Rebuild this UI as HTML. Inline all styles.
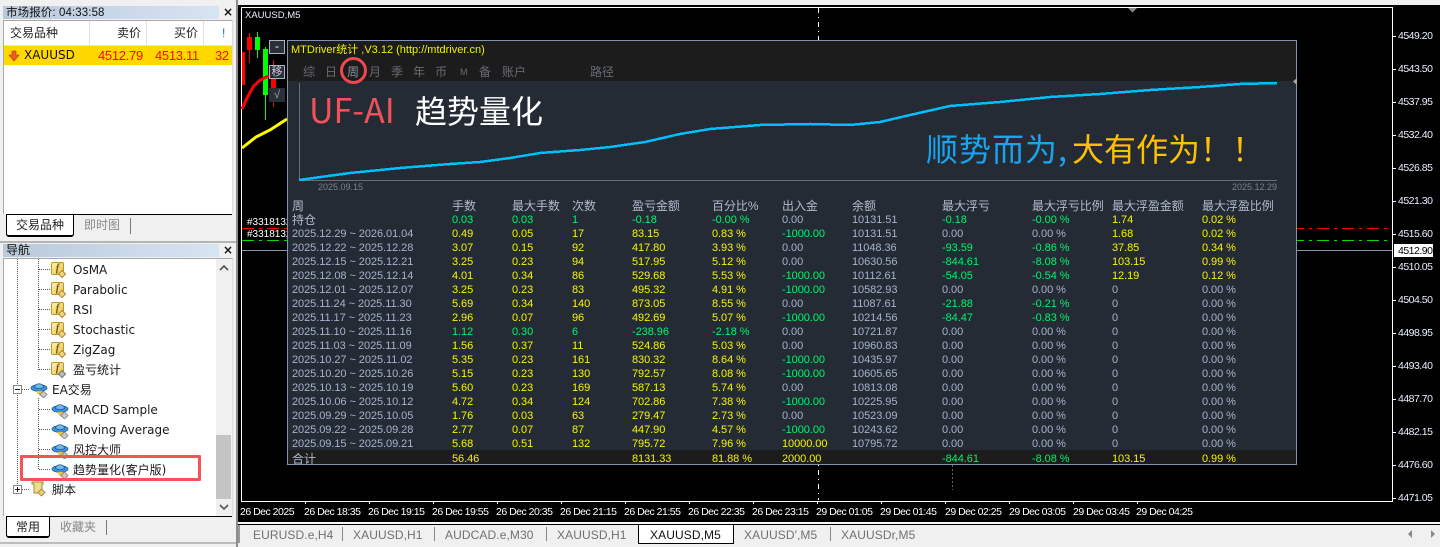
<!DOCTYPE html>
<html><head><meta charset="utf-8"><style>
html,body{margin:0;padding:0;width:1440px;height:547px;overflow:hidden;background:#f0f0f0}
body{position:relative;font-family:"Liberation Sans","Noto Sans CJK SC",sans-serif}
.a,.a *{box-sizing:border-box}
.a{position:absolute;white-space:nowrap}
.tree{font:12px/20px "DejaVu Sans","Noto Sans CJK SC",sans-serif;color:#1a1a1a;height:20px;margin-top:1px}
.ch{font-family:"Liberation Sans",sans-serif;font-size:10.500px;line-height:12px;color:#fff;letter-spacing:-.5px}
.px{left:1398px;color:#e8f0ff;margin-top:2px}
.tk{background:#fff;width:3px;height:1px;left:1393px}
.tt{top:506px}
.vt{background:#fff;width:1px;height:3px;top:501px}
.tab{top:528px;font-size:12px;line-height:15px;color:#707070;letter-spacing:.1px}
.r{position:absolute;left:0;width:1440px;height:14px;margin-top:1px;font:11px/14px "Liberation Sans","Noto Sans CJK SC",sans-serif;color:#a4b4cc;letter-spacing:-.06px}
.r span{position:absolute;white-space:nowrap}
.r span:nth-child(1){left:292px}.r span:nth-child(2){left:452px}.r span:nth-child(3){left:512px}.r span:nth-child(4){left:572px}
.r span:nth-child(5){left:632px}.r span:nth-child(6){left:712px}.r span:nth-child(7){left:782px}.r span:nth-child(8){left:852px}
.r span:nth-child(9){left:942px}.r span:nth-child(10){left:1032px}.r span:nth-child(11){left:1112px}.r span:nth-child(12){left:1202px}
.g{color:#00f56a}.y{color:#f5f500}
.h{font-size:12px;color:#b0bccd}
.m{top:64px;font-size:12px;line-height:16px;color:#666c74}
.dh{background-image:linear-gradient(90deg,#555 1px,transparent 1px);background-size:2px 1px;height:1px}
.dv{background-image:linear-gradient(#555 1px,transparent 1px);background-size:1px 2px;width:1px}
.fi{width:13px;height:13px;border:1px solid #b8962e;border-radius:2px;background:linear-gradient(135deg,#fff2a8,#e8c34a);font:italic bold 10px/11px "Liberation Serif",serif;color:#6b5210;text-align:center}
.dm{width:6px;height:6px;transform:rotate(45deg);background:#f2d67a;border:1px solid #a8883a}
</style></head><body>
<svg width="0" height="0" style="position:absolute"><defs>
<symbol id="hat" viewBox="0 0 18 18"><ellipse cx="9" cy="8" rx="8" ry="3.4" fill="#3d94d6" stroke="#1f5f96" stroke-width=".8"/><path d="M4.5 7.5C4.5 2.5 13.5 2.5 13.5 7.5C11 9 7 9 4.5 7.5Z" fill="#6fb8ea" stroke="#1f5f96" stroke-width=".8"/><path d="M7 11h5l1 3-2.500 2-3-2z" fill="#e9c23c"/><rect x="11" y="12" width="5" height="5" transform="rotate(45 13.500 14.500)" fill="#c9c9c9" stroke="#777" stroke-width=".7"/></symbol>
</defs></svg>

<!-- top strip -->
<div class="a" style="left:0;top:0;width:1440px;height:4px;background:#f0f0f0"></div>

<!-- market watch -->
<div class="a" style="left:3px;top:6px;width:216px;height:13px;background:linear-gradient(90deg,#b9c9da,#d7e4f2)"></div>
<div class="a" style="left:6px;top:6px;font-size:11.500px;line-height:15px;color:#111;letter-spacing:.1px">市场报价: 04:33:58</div>
<div class="a" style="left:223px;top:6px;font:bold 12px/13px 'DejaVu Sans',sans-serif;color:#111">×</div>
<div class="a" style="left:3px;top:20px;width:230px;height:194px;background:#fff;border-left:1px solid #a8a8a8;border-top:1px solid #a8a8a8;border-right:1px solid #ddd"></div>
<div class="a" style="left:89px;top:21px;width:1px;height:24px;background:#e0e0e0"></div>
<div class="a" style="left:146px;top:21px;width:1px;height:24px;background:#e0e0e0"></div>
<div class="a" style="left:203px;top:21px;width:1px;height:24px;background:#e0e0e0"></div>
<div class="a" style="left:4px;top:45px;width:228px;height:1px;background:#e4e4e4"></div>
<div class="a" style="left:10px;top:25px;font-size:12px;line-height:16px;color:#222">交易品种</div>
<div class="a" style="left:117px;top:25px;font-size:12px;line-height:16px;color:#222">卖价</div>
<div class="a" style="left:174px;top:25px;font-size:12px;line-height:16px;color:#222">买价</div>
<div class="a" style="left:222px;top:25px;font-size:12px;line-height:16px;color:#1c6fd0">!</div>
<div class="a" style="left:4px;top:46px;width:228px;height:19px;background:#ffd800"></div>
<svg class="a" style="left:8px;top:50px" width="12" height="12"><path d="M4 1h4v4h3L6 11 1 5h3z" fill="#f05a1e" stroke="#a83a10" stroke-width=".6"/></svg>
<div class="a" style="left:24px;top:47px;font:12px/17px 'DejaVu Sans',sans-serif;color:#111">XAUUSD</div>
<div class="a" style="left:98px;top:47px;font-size:13px;line-height:17px;color:#f01000;letter-spacing:-.3px">4512.79</div>
<div class="a" style="left:155px;top:47px;font-size:13px;line-height:17px;color:#f01000;letter-spacing:-.3px">4513.11</div>
<div class="a" style="left:215px;top:47px;font-size:13px;line-height:17px;color:#f01000;letter-spacing:-.3px">32</div>
<!-- market tabs -->
<div class="a" style="left:73px;top:214px;width:159px;height:1px;background:#000"></div>
<div class="a" style="left:6px;top:214px;width:68px;height:23px;background:#fff;border:1px solid #000;border-top:1px solid #000;border-bottom:2px solid #000;border-radius:0 0 3px 3px"></div>
<div class="a" style="left:16px;top:217px;font-size:12px;line-height:16px;color:#222">交易品种</div>
<div class="a" style="left:84px;top:217px;font-size:12px;line-height:16px;color:#888">即时图</div>
<div class="a" style="left:130px;top:218px;width:1px;height:16px;background:#777"></div>
<div class="a" style="left:0;top:241px;width:236px;height:2px;background:#b4b4b4"></div>

<!-- navigator -->
<div class="a" style="left:3px;top:244px;width:216px;height:13px;background:linear-gradient(90deg,#b9c9da,#d7e4f2)"></div>
<div class="a" style="left:6px;top:243px;font-size:12px;line-height:15px;color:#111">导航</div>
<div class="a" style="left:223px;top:244px;font:bold 12px/13px 'DejaVu Sans',sans-serif;color:#111">×</div>
<div class="a" style="left:3px;top:258px;width:230px;height:258px;background:#fff;border-left:1px solid #a8a8a8;border-top:1px solid #a8a8a8;border-right:1px solid #ddd"></div>
<div class="a" style="left:216px;top:259px;width:16px;height:257px;background:#f0f0f0"></div>
<div class="a" style="left:216px;top:435px;width:15px;height:64px;background:#c4c4c4"></div>
<svg class="a" style="left:219px;top:264px" width="10" height="8"><path d="M1 6L5 2l4 4" fill="none" stroke="#555" stroke-width="1.600"/></svg>
<svg class="a" style="left:219px;top:503px" width="10" height="8"><path d="M1 2l4 4 4-4" fill="none" stroke="#555" stroke-width="1.600"/></svg>
<!-- tree lines -->
<div class="a dv" style="left:17px;top:259px;height:230px"></div>
<div class="a dv" style="left:38px;top:259px;height:111px"></div>
<div class="a dv" style="left:38px;top:398px;height:71px"></div>
<div class="a dh" style="left:39px;top:269px;width:11px"></div>
<div class="a dh" style="left:39px;top:289px;width:11px"></div>
<div class="a dh" style="left:39px;top:309px;width:11px"></div>
<div class="a dh" style="left:39px;top:329px;width:11px"></div>
<div class="a dh" style="left:39px;top:349px;width:11px"></div>
<div class="a dh" style="left:39px;top:369px;width:11px"></div>
<div class="a dh" style="left:39px;top:409px;width:11px"></div>
<div class="a dh" style="left:39px;top:429px;width:11px"></div>
<div class="a dh" style="left:39px;top:449px;width:11px"></div>
<div class="a dh" style="left:39px;top:469px;width:11px"></div>
<div class="a dh" style="left:22px;top:389px;width:8px"></div>
<div class="a dh" style="left:22px;top:489px;width:8px"></div>
<!-- f icons -->
<div class="a fi" style="left:51px;top:262px">f</div><div class="a dm" style="left:59px;top:271px"></div>
<div class="a fi" style="left:51px;top:282px">f</div><div class="a dm" style="left:59px;top:291px"></div>
<div class="a fi" style="left:51px;top:302px">f</div><div class="a dm" style="left:59px;top:311px"></div>
<div class="a fi" style="left:51px;top:322px">f</div><div class="a dm" style="left:59px;top:331px"></div>
<div class="a fi" style="left:51px;top:342px">f</div><div class="a dm" style="left:59px;top:351px"></div>
<div class="a fi" style="left:51px;top:362px">f</div><div class="a dm" style="left:59px;top:371px;background:#bbb;border-color:#777"></div>
<!-- tree text -->
<div class="a tree" style="left:73px;top:259px">OsMA</div>
<div class="a tree" style="left:73px;top:279px">Parabolic</div>
<div class="a tree" style="left:73px;top:299px">RSI</div>
<div class="a tree" style="left:73px;top:319px">Stochastic</div>
<div class="a tree" style="left:73px;top:339px">ZigZag</div>
<div class="a tree" style="left:73px;top:359px">盈亏统计</div>
<div class="a tree" style="left:52px;top:379px">EA交易</div>
<div class="a tree" style="left:73px;top:399px">MACD Sample</div>
<div class="a tree" style="left:73px;top:419px">Moving Average</div>
<div class="a tree" style="left:73px;top:439px">风控大师</div>
<div class="a tree" style="left:73px;top:459px">趋势量化(客户版)</div>
<div class="a tree" style="left:52px;top:479px">脚本</div>
<!-- expanders -->
<div class="a" style="left:13px;top:385px;width:9px;height:9px;border:1px solid #888;background:#fff"></div><div class="a" style="left:15px;top:389px;width:5px;height:1px;background:#222"></div>
<div class="a" style="left:13px;top:485px;width:9px;height:9px;border:1px solid #888;background:#fff"></div><div class="a" style="left:15px;top:489px;width:5px;height:1px;background:#222"></div><div class="a" style="left:17px;top:487px;width:1px;height:5px;background:#222"></div>
<!-- hats -->
<svg class="a" style="left:30px;top:380px" width="18" height="18"><use href="#hat"/></svg>
<svg class="a" style="left:51px;top:401px" width="18" height="18"><use href="#hat"/></svg>
<svg class="a" style="left:51px;top:421px" width="18" height="18"><use href="#hat"/></svg>
<svg class="a" style="left:51px;top:441px" width="18" height="18"><use href="#hat"/></svg>
<svg class="a" style="left:51px;top:461px" width="18" height="18"><use href="#hat"/></svg>
<svg class="a" style="left:30px;top:481px" width="16" height="16"><path d="M2 1h11v2h-1v9H4V3H2z" fill="#f2dc8c" stroke="#a8883a"/><rect x="9" y="9" width="5" height="5" transform="rotate(45 11.500 11.500)" fill="#e8cf70" stroke="#8a7030" stroke-width=".7"/></svg>
<!-- red box -->
<div class="a" style="left:20px;top:455px;width:181px;height:26px;border:3px solid #f5535a;border-radius:1px"></div>
<!-- nav tabs -->
<div class="a" style="left:49px;top:516px;width:183px;height:1px;background:#000"></div>
<div class="a" style="left:6px;top:516px;width:44px;height:22px;background:#fff;border:1px solid #000;border-bottom:2px solid #000;border-radius:0 0 3px 3px"></div>
<div class="a" style="left:16px;top:519px;font-size:12px;line-height:16px;color:#222">常用</div>
<div class="a" style="left:60px;top:519px;font-size:12px;line-height:16px;color:#888">收藏夹</div>
<div class="a" style="left:106px;top:520px;width:1px;height:15px;background:#777"></div>
<div class="a" style="left:0;top:542px;width:236px;height:2px;background:#bdbdbd"></div>

<!-- chart -->
<div class="a" style="left:236px;top:0;width:2px;height:547px;background:#8c8c8c"></div>
<div class="a" style="left:238px;top:5px;width:1202px;height:517px;background:#000"></div>
<div class="a" style="left:241px;top:7px;width:1152px;height:495px;border:1px solid #fff;border-bottom:1px solid #fff"></div>
<div class="a" style="left:1393px;top:8px;width:47px;height:490px;background:#000"></div>
<div class="a" style="left:245px;top:10px;font-size:9.500px;line-height:12px;color:#eaf2ff">XAUUSD,M5</div>
<svg class="a" style="left:0;top:0" width="1440" height="547">
<path d="M1128 8h9l-4.500 4.500z" fill="#8a8a8a"/>
<path d="M818.500 8V500" stroke="#fff" stroke-dasharray="5 4 1 4" fill="none"/>
<path d="M952.500 465V490" stroke="#666" stroke-dasharray="2 2" fill="none"/>
<path d="M242 250.500H1392" stroke="#8796aa" fill="none"/>
<path d="M242 228.500H1392" stroke="#f00" stroke-dasharray="12 5 3 5" fill="none"/>
<path d="M242 240.500H1392" stroke="#0d0" stroke-dasharray="12 5 3 5" fill="none"/>
<rect x="242" y="52" width="3" height="33" fill="#f00"/>
<path d="M249.500 33V63" stroke="#f00"/><rect x="247" y="37" width="5" height="13" fill="#f00"/>
<path d="M257.500 32V58" stroke="#0f0"/><rect x="255" y="37" width="5" height="13" fill="#0f0"/>
<path d="M265.500 47V120" stroke="#0f0"/><rect x="263" y="49" width="5" height="46" fill="#0f0"/>
<path d="M273.500 60V107" stroke="#f00"/><rect x="271" y="78" width="5" height="10" fill="#f00"/>
<path d="M242 109L247 98L253 87L259 81L266 77L275 75" stroke="#f00" stroke-width="3" fill="none"/>
<path d="M242 148L256 137L270 130L287 119" stroke="#ff0" stroke-width="3" fill="none"/>
</svg>
<div class="a" style="left:269px;top:40px;width:16px;height:14px;background:#2a2f38;border:1px solid #aab4c4;color:#fff;font-size:12px;line-height:11px;text-align:center">-</div>
<div class="a" style="left:269px;top:65px;width:16px;height:14px;background:#2a2f38;border:1px solid #aab4c4;color:#ccd;font-size:11px;line-height:12px;text-align:center">移</div>
<div class="a" style="left:269px;top:88px;width:16px;height:14px;background:#2a2f38;color:#9ab;font-size:11px;line-height:14px;text-align:center">√</div>
<div class="a" style="left:247px;top:217px;font-size:10px;line-height:12px;color:#fff">#3318132</div>
<div class="a" style="left:247px;top:229px;font-size:10px;line-height:12px;color:#fff">#3318132</div>

<!-- price axis -->
<div class="a tk" style="top:36px"></div><div class="a ch px" style="top:28px">4549.20</div>
<div class="a tk" style="top:69px"></div><div class="a ch px" style="top:61px">4543.50</div>
<div class="a tk" style="top:102px"></div><div class="a ch px" style="top:94px">4537.95</div>
<div class="a tk" style="top:135px"></div><div class="a ch px" style="top:127px">4532.40</div>
<div class="a tk" style="top:168px"></div><div class="a ch px" style="top:160px">4526.85</div>
<div class="a tk" style="top:201px"></div><div class="a ch px" style="top:193px">4521.30</div>
<div class="a tk" style="top:234px"></div><div class="a ch px" style="top:226px">4515.60</div>
<div class="a" style="left:1394px;top:244px;width:39px;height:13px;background:#fff"></div><div class="a ch px" style="top:243px;color:#000">4512.90</div>
<div class="a tk" style="top:267px"></div><div class="a ch px" style="top:259px">4510.05</div>
<div class="a tk" style="top:300px"></div><div class="a ch px" style="top:292px">4504.50</div>
<div class="a tk" style="top:333px"></div><div class="a ch px" style="top:325px">4498.95</div>
<div class="a tk" style="top:366px"></div><div class="a ch px" style="top:358px">4493.40</div>
<div class="a tk" style="top:399px"></div><div class="a ch px" style="top:391px">4487.70</div>
<div class="a tk" style="top:432px"></div><div class="a ch px" style="top:424px">4482.15</div>
<div class="a tk" style="top:465px"></div><div class="a ch px" style="top:457px">4476.60</div>
<div class="a tk" style="top:498px"></div><div class="a ch px" style="top:490px">4471.05</div>

<!-- time axis -->
<div class="a ch tt" style="left:240px">26 Dec 2025</div>
<div class="a ch tt" style="left:304px">26 Dec 18:35</div><div class="a vt" style="left:305px"></div>
<div class="a ch tt" style="left:368px">26 Dec 19:15</div><div class="a vt" style="left:369px"></div>
<div class="a ch tt" style="left:432px">26 Dec 19:55</div><div class="a vt" style="left:433px"></div>
<div class="a ch tt" style="left:496px">26 Dec 20:35</div><div class="a vt" style="left:497px"></div>
<div class="a ch tt" style="left:560px">26 Dec 21:15</div><div class="a vt" style="left:561px"></div>
<div class="a ch tt" style="left:624px">26 Dec 21:55</div><div class="a vt" style="left:625px"></div>
<div class="a ch tt" style="left:688px">26 Dec 22:35</div><div class="a vt" style="left:689px"></div>
<div class="a ch tt" style="left:752px">26 Dec 23:15</div><div class="a vt" style="left:753px"></div>
<div class="a ch tt" style="left:816px">29 Dec 01:05</div><div class="a vt" style="left:817px"></div>
<div class="a ch tt" style="left:880px">29 Dec 01:45</div><div class="a vt" style="left:881px"></div>
<div class="a ch tt" style="left:945px">29 Dec 02:25</div><div class="a vt" style="left:945px"></div>
<div class="a ch tt" style="left:1009px">29 Dec 03:05</div><div class="a vt" style="left:1009px"></div>
<div class="a ch tt" style="left:1073px">29 Dec 03:45</div><div class="a vt" style="left:1073px"></div>
<div class="a ch tt" style="left:1136px">29 Dec 04:25</div><div class="a vt" style="left:1137px"></div>

<!-- bottom tabs -->
<div class="a" style="left:238px;top:522px;width:1202px;height:2px;background:#f8f8f8"></div>
<div class="a" style="left:238px;top:524px;width:1202px;height:1px;background:#000"></div>
<div class="a" style="left:238px;top:525px;width:2px;height:18px;background:#999"></div>
<div class="a" style="left:638px;top:524px;width:96px;height:20px;background:#fff;border:1px solid #000;border-top:1px solid #000"></div>
<div class="a tab" style="left:253px">EURUSD.e,H4</div>
<div class="a" style="left:342px;top:527px;width:1px;height:14px;background:#888"></div>
<div class="a tab" style="left:353px">XAUUSD,H1</div>
<div class="a" style="left:434px;top:527px;width:1px;height:14px;background:#888"></div>
<div class="a tab" style="left:445px">AUDCAD.e,M30</div>
<div class="a" style="left:546px;top:527px;width:1px;height:14px;background:#888"></div>
<div class="a tab" style="left:557px">XAUUSD,H1</div>
<div class="a tab" style="left:650px;color:#111">XAUUSD,M5</div>
<div class="a tab" style="left:744px">XAUUSD',M5</div>
<div class="a" style="left:830px;top:527px;width:1px;height:14px;background:#888"></div>
<div class="a tab" style="left:841px">XAUUSDr,M5</div>
<svg class="a" style="left:1406px;top:529px" width="30" height="10"><path d="M6 1v8L2 5zM25 1v8l4-4z" fill="#888"/></svg>

<!-- EA panel -->
<div class="a" style="left:287px;top:40px;width:1010px;height:425px;background:#252b35;border:1px solid #8094ad"></div>
<div class="a" style="left:288px;top:41px;width:1008px;height:40px;background:#1c1c1c"></div>
<div class="a" style="left:288px;top:450px;width:1008px;height:14px;background:#1c1c1c"></div>
<div class="a" style="left:291px;top:43px;font-size:11px;line-height:14px;color:#f0f000">MTDriver统计 ,V3.12 (http://mtdriver.cn)</div>
<div class="a m" style="left:303px">综</div>
<div class="a m" style="left:325px">日</div>
<div class="a m" style="left:347px;color:#8a929e">周</div>
<div class="a m" style="left:369px">月</div>
<div class="a m" style="left:391px">季</div>
<div class="a m" style="left:413px">年</div>
<div class="a m" style="left:435px">币</div>
<div class="a m" style="left:460px;font-size:9px">M</div>
<div class="a m" style="left:479px">备</div>
<div class="a m" style="left:502px">账户</div>
<div class="a m" style="left:590px">路径</div>
<svg class="a" style="left:0;top:0" width="1440" height="547">
<path d="M299.500 83V180.500H1277" stroke="#6b6f75" fill="none"/>
<path d="M1297 78v7l-4-3.500z" fill="#aaa"/>
<path d="M299 180L350 173L400 168L450 164L480 162L510 158L540 153L580 150L610 147L645 142L680 134L710 129L760 125L810 124L850 125L880 122L910 115L950 106L1000 102L1050 97L1100 94L1150 90L1200 87L1240 84L1277 83" stroke="#00bfff" stroke-width="2.500" fill="none" shape-rendering="crispEdges"/>
<circle cx="353.500" cy="70.500" r="12" fill="none" stroke="#f0484f" stroke-width="3"/>
</svg>
<div class="a" style="left:309px;top:85px;font:34px/48px 'Noto Sans CJK SC',sans-serif;color:#f0525a">UF-AI</div>
<div class="a" style="left:415px;top:87px;font:32px/46px 'Noto Sans CJK SC',sans-serif;color:#fff">趋势量化</div>
<div class="a" style="left:926px;top:125px;font:32px/46px 'Noto Sans CJK SC',sans-serif;color:#18a5ee;letter-spacing:1px">顺势而为,</div>
<div class="a" style="left:1072px;top:125px;font:32px/46px 'Noto Sans CJK SC',sans-serif;color:#ffc000">大有作为！！</div>
<div class="a" style="left:318px;top:182px;font-size:9px;line-height:11px;color:#7a8290">2025.09.15</div>
<div class="a" style="left:1232px;top:182px;font-size:9px;line-height:11px;color:#7a8290">2025.12.29</div>

<div class="r h" style="top:198px"><span>周</span><span>手数</span><span>最大手数</span><span>次数</span><span>盈亏金额</span><span>百分比%</span><span>出入金</span><span>余额</span><span>最大浮亏</span><span>最大浮亏比例</span><span>最大浮盈金额</span><span>最大浮盈比例</span></div>
<div class="r" style="top:212px"><span class="h">持仓</span><span class="g">0.03</span><span class="g">0.03</span><span class="g">1</span><span class="g">-0.18</span><span class="g">-0.00 %</span><span>0.00</span><span>10131.51</span><span class="g">-0.18</span><span class="g">-0.00 %</span><span class="y">1.74</span><span class="y">0.02 %</span></div>
<div class="r" style="top:226px"><span>2025.12.29 ~ 2026.01.04</span><span class="y">0.49</span><span class="y">0.05</span><span class="y">17</span><span class="y">83.15</span><span class="y">0.83 %</span><span class="g">-1000.00</span><span>10131.51</span><span>0.00</span><span>0.00 %</span><span class="y">1.68</span><span class="y">0.02 %</span></div>
<div class="r" style="top:240px"><span>2025.12.22 ~ 2025.12.28</span><span class="y">3.07</span><span class="y">0.15</span><span class="y">92</span><span class="y">417.80</span><span class="y">3.93 %</span><span>0.00</span><span>11048.36</span><span class="g">-93.59</span><span class="g">-0.86 %</span><span class="y">37.85</span><span class="y">0.34 %</span></div>
<div class="r" style="top:254px"><span>2025.12.15 ~ 2025.12.21</span><span class="y">3.25</span><span class="y">0.23</span><span class="y">94</span><span class="y">517.95</span><span class="y">5.12 %</span><span>0.00</span><span>10630.56</span><span class="g">-844.61</span><span class="g">-8.08 %</span><span class="y">103.15</span><span class="y">0.99 %</span></div>
<div class="r" style="top:268px"><span>2025.12.08 ~ 2025.12.14</span><span class="y">4.01</span><span class="y">0.34</span><span class="y">86</span><span class="y">529.68</span><span class="y">5.53 %</span><span class="g">-1000.00</span><span>10112.61</span><span class="g">-54.05</span><span class="g">-0.54 %</span><span class="y">12.19</span><span class="y">0.12 %</span></div>
<div class="r" style="top:282px"><span>2025.12.01 ~ 2025.12.07</span><span class="y">3.25</span><span class="y">0.23</span><span class="y">83</span><span class="y">495.32</span><span class="y">4.91 %</span><span class="g">-1000.00</span><span>10582.93</span><span>0.00</span><span>0.00 %</span><span>0</span><span>0.00 %</span></div>
<div class="r" style="top:296px"><span>2025.11.24 ~ 2025.11.30</span><span class="y">5.69</span><span class="y">0.34</span><span class="y">140</span><span class="y">873.05</span><span class="y">8.55 %</span><span>0.00</span><span>11087.61</span><span class="g">-21.88</span><span class="g">-0.21 %</span><span>0</span><span>0.00 %</span></div>
<div class="r" style="top:310px"><span>2025.11.17 ~ 2025.11.23</span><span class="y">2.96</span><span class="y">0.07</span><span class="y">96</span><span class="y">492.69</span><span class="y">5.07 %</span><span class="g">-1000.00</span><span>10214.56</span><span class="g">-84.47</span><span class="g">-0.83 %</span><span>0</span><span>0.00 %</span></div>
<div class="r" style="top:324px"><span>2025.11.10 ~ 2025.11.16</span><span class="g">1.12</span><span class="g">0.30</span><span class="g">6</span><span class="g">-238.96</span><span class="g">-2.18 %</span><span>0.00</span><span>10721.87</span><span>0.00</span><span>0.00 %</span><span>0</span><span>0.00 %</span></div>
<div class="r" style="top:338px"><span>2025.11.03 ~ 2025.11.09</span><span class="y">1.56</span><span class="y">0.37</span><span class="y">11</span><span class="y">524.86</span><span class="y">5.03 %</span><span>0.00</span><span>10960.83</span><span>0.00</span><span>0.00 %</span><span>0</span><span>0.00 %</span></div>
<div class="r" style="top:352px"><span>2025.10.27 ~ 2025.11.02</span><span class="y">5.35</span><span class="y">0.23</span><span class="y">161</span><span class="y">830.32</span><span class="y">8.64 %</span><span class="g">-1000.00</span><span>10435.97</span><span>0.00</span><span>0.00 %</span><span>0</span><span>0.00 %</span></div>
<div class="r" style="top:366px"><span>2025.10.20 ~ 2025.10.26</span><span class="y">5.15</span><span class="y">0.23</span><span class="y">130</span><span class="y">792.57</span><span class="y">8.08 %</span><span class="g">-1000.00</span><span>10605.65</span><span>0.00</span><span>0.00 %</span><span>0</span><span>0.00 %</span></div>
<div class="r" style="top:380px"><span>2025.10.13 ~ 2025.10.19</span><span class="y">5.60</span><span class="y">0.23</span><span class="y">169</span><span class="y">587.13</span><span class="y">5.74 %</span><span>0.00</span><span>10813.08</span><span>0.00</span><span>0.00 %</span><span>0</span><span>0.00 %</span></div>
<div class="r" style="top:394px"><span>2025.10.06 ~ 2025.10.12</span><span class="y">4.72</span><span class="y">0.34</span><span class="y">124</span><span class="y">702.86</span><span class="y">7.38 %</span><span class="g">-1000.00</span><span>10225.95</span><span>0.00</span><span>0.00 %</span><span>0</span><span>0.00 %</span></div>
<div class="r" style="top:408px"><span>2025.09.29 ~ 2025.10.05</span><span class="y">1.76</span><span class="y">0.03</span><span class="y">63</span><span class="y">279.47</span><span class="y">2.73 %</span><span>0.00</span><span>10523.09</span><span>0.00</span><span>0.00 %</span><span>0</span><span>0.00 %</span></div>
<div class="r" style="top:422px"><span>2025.09.22 ~ 2025.09.28</span><span class="y">2.77</span><span class="y">0.07</span><span class="y">87</span><span class="y">447.90</span><span class="y">4.57 %</span><span class="g">-1000.00</span><span>10243.62</span><span>0.00</span><span>0.00 %</span><span>0</span><span>0.00 %</span></div>
<div class="r" style="top:436px"><span>2025.09.15 ~ 2025.09.21</span><span class="y">5.68</span><span class="y">0.51</span><span class="y">132</span><span class="y">795.72</span><span class="y">7.96 %</span><span class="y">10000.00</span><span>10795.72</span><span>0.00</span><span>0.00 %</span><span>0</span><span>0.00 %</span></div>
<div class="r" style="top:451px"><span class="h">合计</span><span class="y">56.46</span><span></span><span></span><span class="y">8131.33</span><span class="y">81.88 %</span><span class="y">2000.00</span><span></span><span class="g">-844.61</span><span class="g">-8.08 %</span><span class="y">103.15</span><span class="y">0.99 %</span></div>
</body></html>
